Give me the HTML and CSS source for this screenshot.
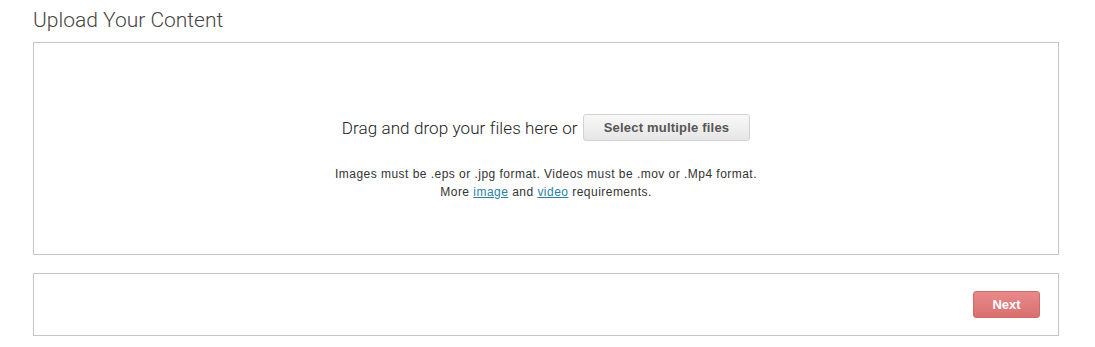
FILE: index.html
```html
<!DOCTYPE html>
<html lang="en">

<head>
  <meta charset="UTF-8" />
  <meta name="viewport" content="width=device-width, initial-scale=1.0" />
  <title>Upload Your Content</title>
  <link rel="stylesheet" href="styles.css">
</head>

<body>
  <div class="page">
    <h1 class="title">Upload Your Content</h1>

    <div class="drop-zone">
      <div class="drop-line">
        <span>Drag and drop your files here or</span>
        <button type="button" class="select-btn">Select multiple files</button>
      </div>
      <p class="drop-note">
        Images must be .eps or .jpg format. Videos must be .mov or .Mp4 format.<br>
        More <a href="#">image</a> and <a href="#">video</a> requirements.
      </p>
    </div>

    <div class="actions">
      <button type="button" class="next-btn">Next</button>
    </div>
  </div>
</body>

</html>
```

FILE: styles.css
```css
:root {
  --border: #c4c4c4;
  --text: #333;
  --link: #2a7fa6;
}

* {
  box-sizing: border-box;
}

body {
  margin: 0;
  font-family: 'Liberation Sans', Arial, sans-serif;
  color: var(--text);
  background: #fff;
}

.page {
  width: 1026px;
  margin-left: 33px;
  padding-top: 8px;
}

.title {
  margin: 0 0 10px;
  font-family: Roboto, sans-serif;
  font-weight: 300;
  font-size: 21px;
  line-height: 24px;
  color: #444;
}

.drop-zone {
  height: 213px;
  border: 1px solid var(--border);
  padding-top: 71px;
  text-align: center;
}

.drop-line {
  display: flex;
  justify-content: center;
  align-items: center;
  gap: 5px;
  font-family: Roboto, sans-serif;
  font-weight: 300;
  font-size: 17px;
  letter-spacing: 0.1px;
  color: #222;
}

.select-btn {
  height: 27px;
  padding: 0 20px;
  border: 1px solid #d2d2d2;
  border-radius: 3px;
  background: linear-gradient(#f8f8f8, #e6e6e6);
  font-family: 'Liberation Sans', Arial, sans-serif;
  font-weight: bold;
  font-size: 13px;
  letter-spacing: 0.2px;
  color: #555;
}

.drop-note {
  margin: 24px 0 0;
  font-size: 12px;
  line-height: 18px;
  letter-spacing: 0.47px;
  color: #333;
}

.drop-note a {
  color: var(--link);
}

.actions {
  margin-top: 18px;
  height: 63px;
  border: 1px solid var(--border);
  display: flex;
  justify-content: flex-end;
  align-items: center;
  padding-right: 18px;
}

.next-btn {
  width: 67px;
  height: 27px;
  border: 1px solid #d06a6a;
  border-radius: 3px;
  background: linear-gradient(#e88a8a, #d96f6f);
  color: #fff;
  font-family: 'Liberation Sans', Arial, sans-serif;
  font-weight: bold;
  font-size: 13px;
}
```
